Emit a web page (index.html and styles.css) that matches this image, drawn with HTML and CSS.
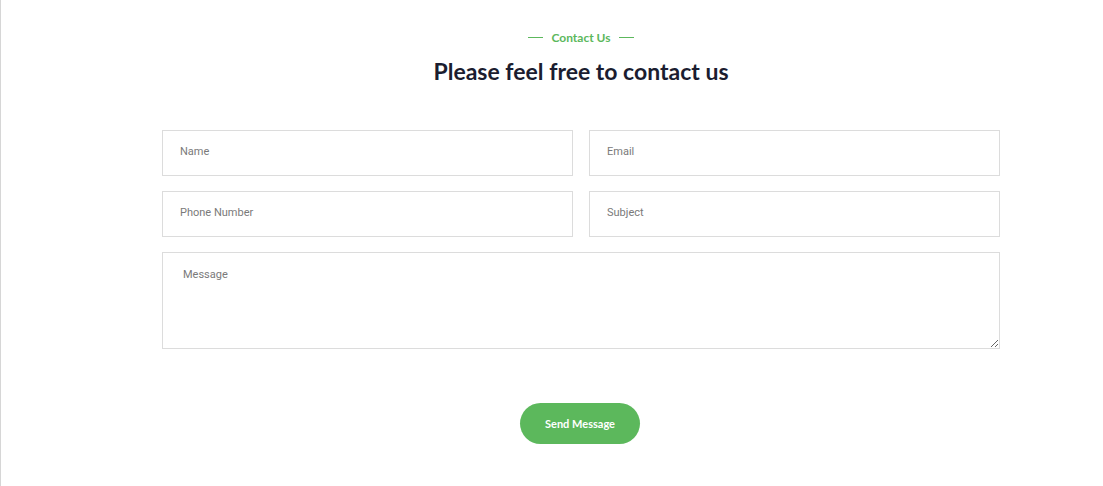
FILE: index.html
```html
<!DOCTYPE html>
<html lang="en">
<head>
<meta charset="utf-8">
<title>Contact</title>
<link rel="stylesheet" href="styles.css">
</head>
<body>
<div class="page">
  <section class="contact">
    <div class="eyebrow"><span class="dash"></span><span class="eyebrow-text">Contact Us</span><span class="dash"></span></div>
    <h2 class="title">Please feel free to contact us</h2>
    <form class="form">
      <div class="grid">
        <input class="field" type="text" placeholder="Name">
        <input class="field" type="email" placeholder="Email">
        <input class="field" type="text" placeholder="Phone Number">
        <input class="field" type="text" placeholder="Subject">
        <textarea class="field area" placeholder="Message"></textarea>
      </div>
      <div class="actions"><button class="btn" type="button">Send Message</button></div>
    </form>
  </section>
</div>
</body>
</html>
```

FILE: styles.css
```css
html, body { margin: 0; padding: 0; background: #fff; }
body { font-family: "Lato", "Liberation Sans", sans-serif; }
.page {
  min-height: 486px;
  border-left: 1px solid #d6d6d6;
  box-sizing: border-box;
}
.contact {
  width: 838px;
  margin-left: 161px;
  padding-top: 30px;
}
.eyebrow {
  display: flex;
  justify-content: center;
  align-items: center;
  gap: 8px;
  color: #5cb85c;
  font-size: 12px;
  font-weight: 700;
  height: 14px;
}
.dash { width: 15px; height: 1px; background: #5cb85c; }
.title {
  margin: 13px 0 0;
  text-align: center;
  font-size: 23px;
  font-weight: 700;
  color: #1b1d30;
  line-height: 28px;
}
.form { margin-top: 45px; }
.grid {
  display: grid;
  grid-template-columns: 1fr 1fr;
  column-gap: 16px;
  row-gap: 15px;
}
.field {
  height: 46px;
  box-sizing: border-box;
  border: 1px solid #dcdcdc;
  padding: 0 17px 3px;
  font-family: "Roboto", "Liberation Sans", sans-serif;
  font-size: 11px;
  color: #555;
  outline: none;
  margin: 0;
}
.field::placeholder { color: #7a7a7a; }
.area {
  grid-column: 1 / 3;
  height: 97px;
  padding: 15px 20px;
  resize: vertical;
}
.actions {
  display: flex;
  justify-content: center;
  margin-top: 54px;
  padding-right: 2px;
}
.btn {
  width: 120px;
  height: 41px;
  border: none;
  border-radius: 21px;
  background: #5cb85c;
  color: #fff;
  font-family: "Lato", "Liberation Sans", sans-serif;
  font-size: 11px;
  font-weight: 700;
}
```
